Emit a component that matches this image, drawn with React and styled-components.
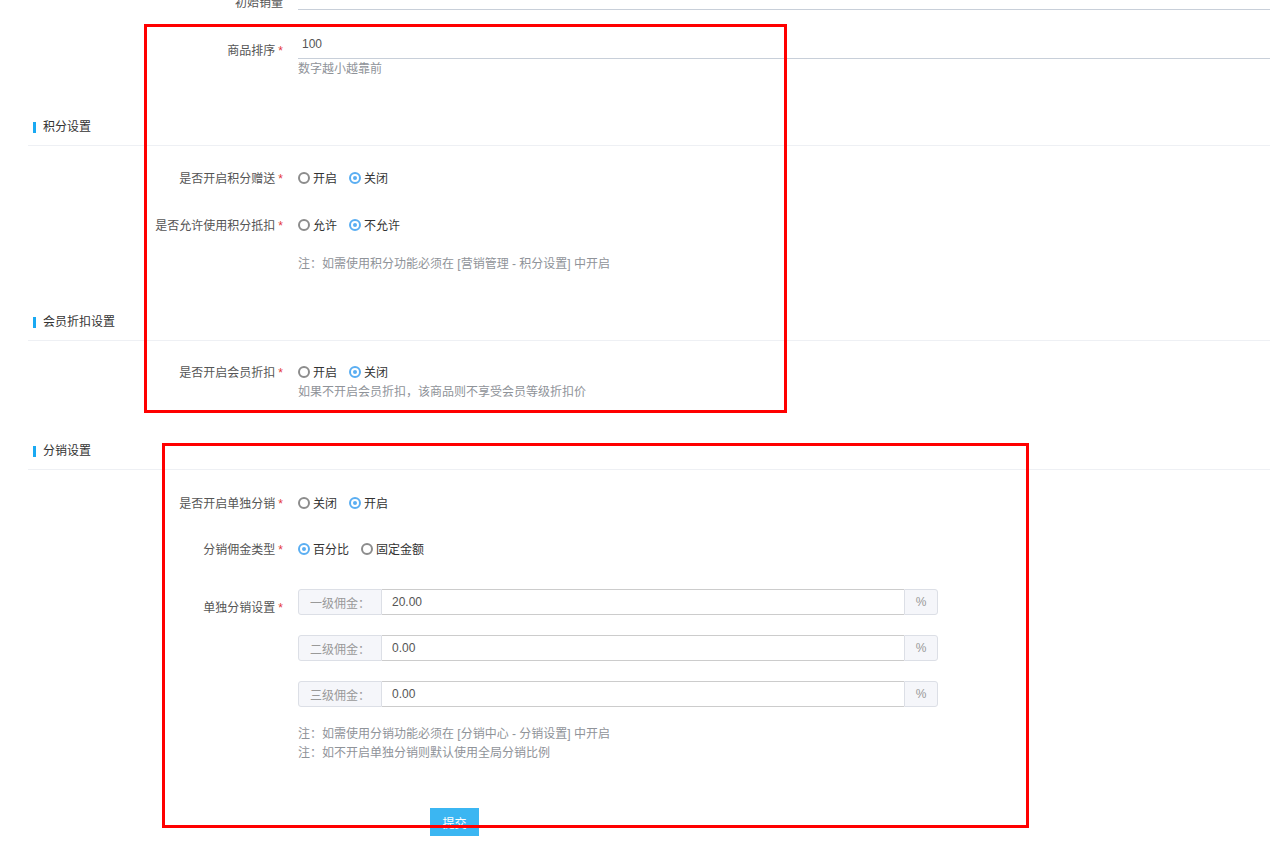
import React from "react";
import styled, { createGlobalStyle } from "styled-components";

const Global = createGlobalStyle`
  html, body {
    margin: 0;
    padding: 0;
    background: #fff;
    font-family: "Liberation Sans", "Noto Sans CJK SC", sans-serif;
    font-size: 12px;
    color: #333;
  }
`;

const Screen = styled.div`
  position: relative;
  width: 1270px;
  height: 853px;
  overflow: hidden;
`;

const Page = styled.div`
  margin-top: -19px;
  padding-left: 28px;
`;

const Row = styled.div`
  display: flex;
  align-items: flex-start;
  margin-top: ${(p) => p.$mt || 0}px;
`;

const Label = styled.div`
  width: 255px;
  flex-shrink: 0;
  text-align: right;
  line-height: 20px;
  padding-top: ${(p) => p.$pt || 0}px;
  color: #555;
  white-space: nowrap;
`;

const Star = styled.span`
  color: #e4393c;
  margin-left: 3px;
`;

const Content = styled.div`
  flex: 1;
  margin-left: 15px;
`;

const LineInput = styled.div`
  height: 28px;
  line-height: 28px;
  padding-left: 4px;
  border-bottom: 1px solid #c8cfd9;
  color: #555;
`;

const Hint = styled.div`
  line-height: ${(p) => p.$lh || 20}px;
  margin-top: ${(p) => p.$mt || 0}px;
  color: #8f9399;
`;

const Section = styled.div`
  display: flex;
  align-items: center;
  margin-top: ${(p) => p.$mt}px;
  padding: 0 0 8px 5px;
  line-height: 20px;
  border-bottom: 1px solid #eef0f4;
  color: #333;
  &::before {
    content: "";
    width: 3px;
    height: 11px;
    background: #1aa9f2;
    margin-right: 7px;
  }
`;

const RadioGroup = styled.div`
  display: flex;
  align-items: center;
  gap: 12px;
  height: 20px;
`;

const RadioItem = styled.label`
  display: flex;
  align-items: center;
  gap: 3px;
  color: #333;
  line-height: 20px;
`;

const Circle = styled.span`
  box-sizing: border-box;
  width: 12px;
  height: 12px;
  border-radius: 50%;
  margin-top: -2px;
  border: 2px solid ${(p) => (p.$on ? "#5aaef2" : "#8c8c8c")};
  display: flex;
  align-items: center;
  justify-content: center;
  &::after {
    content: "";
    width: 4px;
    height: 4px;
    border-radius: 50%;
    background: ${(p) => (p.$on ? "#5aaef2" : "transparent")};
  }
`;

const Groups = styled.div`
  display: flex;
  flex-direction: column;
  gap: 20px;
`;

const Group = styled.div`
  display: flex;
  width: 640px;
  height: 26px;
`;

const Addon = styled.div`
  box-sizing: border-box;
  width: ${(p) => p.$w}px;
  display: flex;
  align-items: center;
  justify-content: center;
  background: #f5f6fa;
  border: 1px solid #dcdfe6;
  border-radius: ${(p) => (p.$right ? "0 3px 3px 0" : "3px 0 0 3px")};
  color: #999;
`;

const GroupInput = styled.div`
  box-sizing: border-box;
  flex: 1;
  display: flex;
  align-items: center;
  padding-left: 10px;
  border: 1px solid #ccc;
  border-left: none;
  border-right: none;
  color: #555;
`;

const Submit = styled.button`
  margin: 45px 0 0 402px;
  width: 49px;
  height: 28px;
  border: none;
  background: #3bb6f2;
  color: #fff;
  font-family: inherit;
  font-size: 12px;
  padding: 0;
`;

const Mark = styled.div`
  position: absolute;
  box-sizing: border-box;
  border: 3px solid #ff0000;
  left: ${(p) => p.$x}px;
  top: ${(p) => p.$y}px;
  width: ${(p) => p.$w}px;
  height: ${(p) => p.$h}px;
  pointer-events: none;
`;

const Radios = ({ items, checked }) => (
  <RadioGroup>
    {items.map((t, i) => (
      <RadioItem key={t}>
        <Circle $on={i === checked} />
        {t}
      </RadioItem>
    ))}
  </RadioGroup>
);

const levels = [
  ["一级佣金：", "20.00"],
  ["二级佣金：", "0.00"],
  ["三级佣金：", "0.00"],
];

export default function App() {
  return (
    <Screen>
      <Global />
      <Page>
        <Row>
          <Label $pt={12}>初始销量</Label>
          <Content>
            <LineInput>0</LineInput>
          </Content>
        </Row>
        <Row $mt={17}>
          <Label $pt={11}>
            商品排序<Star>*</Star>
          </Label>
          <Content>
            <LineInput>100</LineInput>
            <Hint>数字越小越靠前</Hint>
          </Content>
        </Row>

        <Section $mt={38}>积分设置</Section>
        <Row $mt={23}>
          <Label>
            是否开启积分赠送<Star>*</Star>
          </Label>
          <Content>
            <Radios items={["开启", "关闭"]} checked={1} />
          </Content>
        </Row>
        <Row $mt={27}>
          <Label>
            是否允许使用积分抵扣<Star>*</Star>
          </Label>
          <Content>
            <Radios items={["允许", "不允许"]} checked={1} />
            <Hint $mt={18}>注：如需使用积分功能必须在 [营销管理 - 积分设置] 中开启</Hint>
          </Content>
        </Row>

        <Section $mt={38}>会员折扣设置</Section>
        <Row $mt={22}>
          <Label>
            是否开启会员折扣<Star>*</Star>
          </Label>
          <Content>
            <Radios items={["开启", "关闭"]} checked={1} />
            <Hint $lh={18}>如果不开启会员折扣，该商品则不享受会员等级折扣价</Hint>
          </Content>
        </Row>

        <Section $mt={40}>分销设置</Section>
        <Row $mt={24}>
          <Label>
            是否开启单独分销<Star>*</Star>
          </Label>
          <Content>
            <Radios items={["关闭", "开启"]} checked={1} />
          </Content>
        </Row>
        <Row $mt={26}>
          <Label>
            分销佣金类型<Star>*</Star>
          </Label>
          <Content>
            <Radios items={["百分比", "固定金额"]} checked={0} />
          </Content>
        </Row>
        <Row $mt={29}>
          <Label $pt={9}>
            单独分销设置<Star>*</Star>
          </Label>
          <Content>
            <Groups>
              {levels.map(([name, val]) => (
                <Group key={name}>
                  <Addon $w={84}>{name}</Addon>
                  <GroupInput>{val}</GroupInput>
                  <Addon $w={34} $right>
                    %
                  </Addon>
                </Group>
              ))}
            </Groups>
            <Hint $lh={19} $mt={18}>
              注：如需使用分销功能必须在 [分销中心 - 分销设置] 中开启
            </Hint>
            <Hint $lh={19}>注：如不开启单独分销则默认使用全局分销比例</Hint>
          </Content>
        </Row>
        <Submit>提交</Submit>
      </Page>
      <Mark $x={144} $y={24} $w={643} $h={389} />
      <Mark $x={162} $y={443} $w={867} $h={385} />
    </Screen>
  );
}
